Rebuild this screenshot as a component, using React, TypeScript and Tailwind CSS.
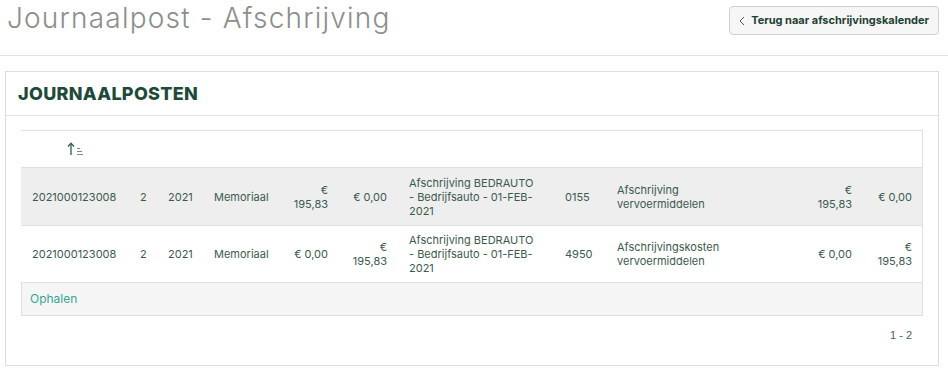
import type { ReactNode } from "react";

// ─── Data ─────────────────────────────────────────────────

type Row = {
  nummer: string;
  regel: string;
  jaar: string;
  dagboek: string;
  debet: ReactNode;
  credit: ReactNode;
  omschrijving: ReactNode;
  rekening: string;
  rekeningNaam: ReactNode;
  debet2: ReactNode;
  credit2: ReactNode;
};

const bedrag = (
  <>
    €<br />
    195,83
  </>
);

const omschrijving = (
  <>
    Afschrijving BEDRAUTO
    <br />- Bedrijfsauto - 01-FEB-
    <br />
    2021
  </>
);

const ROWS: Row[] = [
  {
    nummer: "2021000123008",
    regel: "2",
    jaar: "2021",
    dagboek: "Memoriaal",
    debet: bedrag,
    credit: "€ 0,00",
    omschrijving,
    rekening: "0155",
    rekeningNaam: (
      <>
        Afschrijving
        <br />
        vervoermiddelen
      </>
    ),
    debet2: bedrag,
    credit2: "€ 0,00",
  },
  {
    nummer: "2021000123008",
    regel: "2",
    jaar: "2021",
    dagboek: "Memoriaal",
    debet: "€ 0,00",
    credit: bedrag,
    omschrijving,
    rekening: "4950",
    rekeningNaam: (
      <>
        Afschrijvingskosten
        <br />
        vervoermiddelen
      </>
    ),
    debet2: "€ 0,00",
    credit2: bedrag,
  },
];

const GRID =
  "grid grid-cols-[108px_28px_46px_78px_58px_59px_156px_52px_195px_62px_60px]";

// ─── Icons ────────────────────────────────────────────────

function SortAscIcon() {
  return (
    <svg width="18" height="14" viewBox="0 0 18 14" fill="none">
      <path d="M4 13V1.5" stroke="#2f5e4d" strokeWidth="1.3" />
      <path d="M1 4.5L4 1.2L7 4.5" stroke="#2f5e4d" strokeWidth="1.3" />
      <path d="M10 6.5h3M10 9.5h5M10 12.5h6" stroke="#6f9385" strokeWidth="1.2" />
    </svg>
  );
}

function ChevronLeft() {
  return (
    <svg width="6" height="10" viewBox="0 0 6 10" fill="none">
      <path d="M5 1L1 5l4 4" stroke="#555" strokeWidth="1" />
    </svg>
  );
}

// ─── Table row ────────────────────────────────────────────

function DataRow({
  row,
  striped,
  height,
}: {
  row: Row;
  striped: boolean;
  height: string;
}) {
  const cell = "px-[11px] flex items-center";
  return (
    <div
      className={`${GRID} ${height} border-b border-[#e0e0e0] ${
        striped ? "bg-[#eeeeee]" : "bg-white"
      }`}
    >
      <div className={cell}>{row.nummer}</div>
      <div className={cell}>{row.regel}</div>
      <div className={cell}>{row.jaar}</div>
      <div className={cell}>{row.dagboek}</div>
      <div className={`${cell} justify-end text-right`}>
        <span>{row.debet}</span>
      </div>
      <div className={`${cell} justify-end text-right`}>
        <span>{row.credit}</span>
      </div>
      <div className={cell}>
        <span>{row.omschrijving}</span>
      </div>
      <div className={cell}>{row.rekening}</div>
      <div className={cell}>
        <span>{row.rekeningNaam}</span>
      </div>
      <div className={`${cell} justify-end text-right`}>
        <span>{row.debet2}</span>
      </div>
      <div className={`${cell} justify-end text-right`}>
        <span>{row.credit2}</span>
      </div>
    </div>
  );
}

// ─── Page ─────────────────────────────────────────────────

export default function App() {
  return (
    <div className="w-[948px] h-[372px] bg-white overflow-hidden font-['Inter',sans-serif]">
      {/* Page header */}
      <div className="flex items-start justify-between h-[56px] border-b border-[#e2e2e2] pl-[7px] pr-[9px]">
        <h1 className="mt-[2px] text-[28px] leading-[32px] font-light tracking-[1.2px] text-[#8d8d8d]">
          Journaalpost - Afschrijving
        </h1>
        <button className="mt-[6px] flex items-center gap-[6px] h-[29px] px-[9px] rounded-[4px] border border-[#d0d0d0] bg-[#f6f6f6] text-[11px] font-bold text-[#1f3f33]">
          <ChevronLeft />
          Terug naar afschrijvingskalender
        </button>
      </div>

      {/* Panel */}
      <div className="ml-[5px] mr-[9px] mt-[15px] h-[295px] border border-[#dedede]">
        <div className="h-[44px] flex items-center px-[12px] border-b border-[#e2e2e2]">
          <h2 className="text-[18px] font-extrabold tracking-[0.3px] text-[#1e4a3a]">
            JOURNAALPOSTEN
          </h2>
        </div>

        <div className="px-[15px] pt-[14px]">
          <div className="border-t border-r border-[#e0e0e0] text-[11px] leading-[14px] text-[#3b5a4e]">
            <div className={`${GRID} h-[37px] border-b border-[#e0e0e0]`}>
              <div className="flex items-center justify-center pl-[2px]">
                <SortAscIcon />
              </div>
            </div>
            <DataRow row={ROWS[0]} striped height="h-[58px]" />
            <DataRow row={ROWS[1]} striped={false} height="h-[57px]" />
          </div>
          <div className="h-[33px] flex items-center px-[8px] bg-[#f5f5f5] border-x border-b border-[#e0e0e0]">
            <button className="text-[12px] text-[#36a592]">Ophalen</button>
          </div>
          <div className="flex justify-end pr-[11px] pt-[11px] text-[11px] text-[#3d6656] font-['Liberation_Sans',sans-serif]">
            1 - 2
          </div>
        </div>
      </div>
    </div>
  );
}
